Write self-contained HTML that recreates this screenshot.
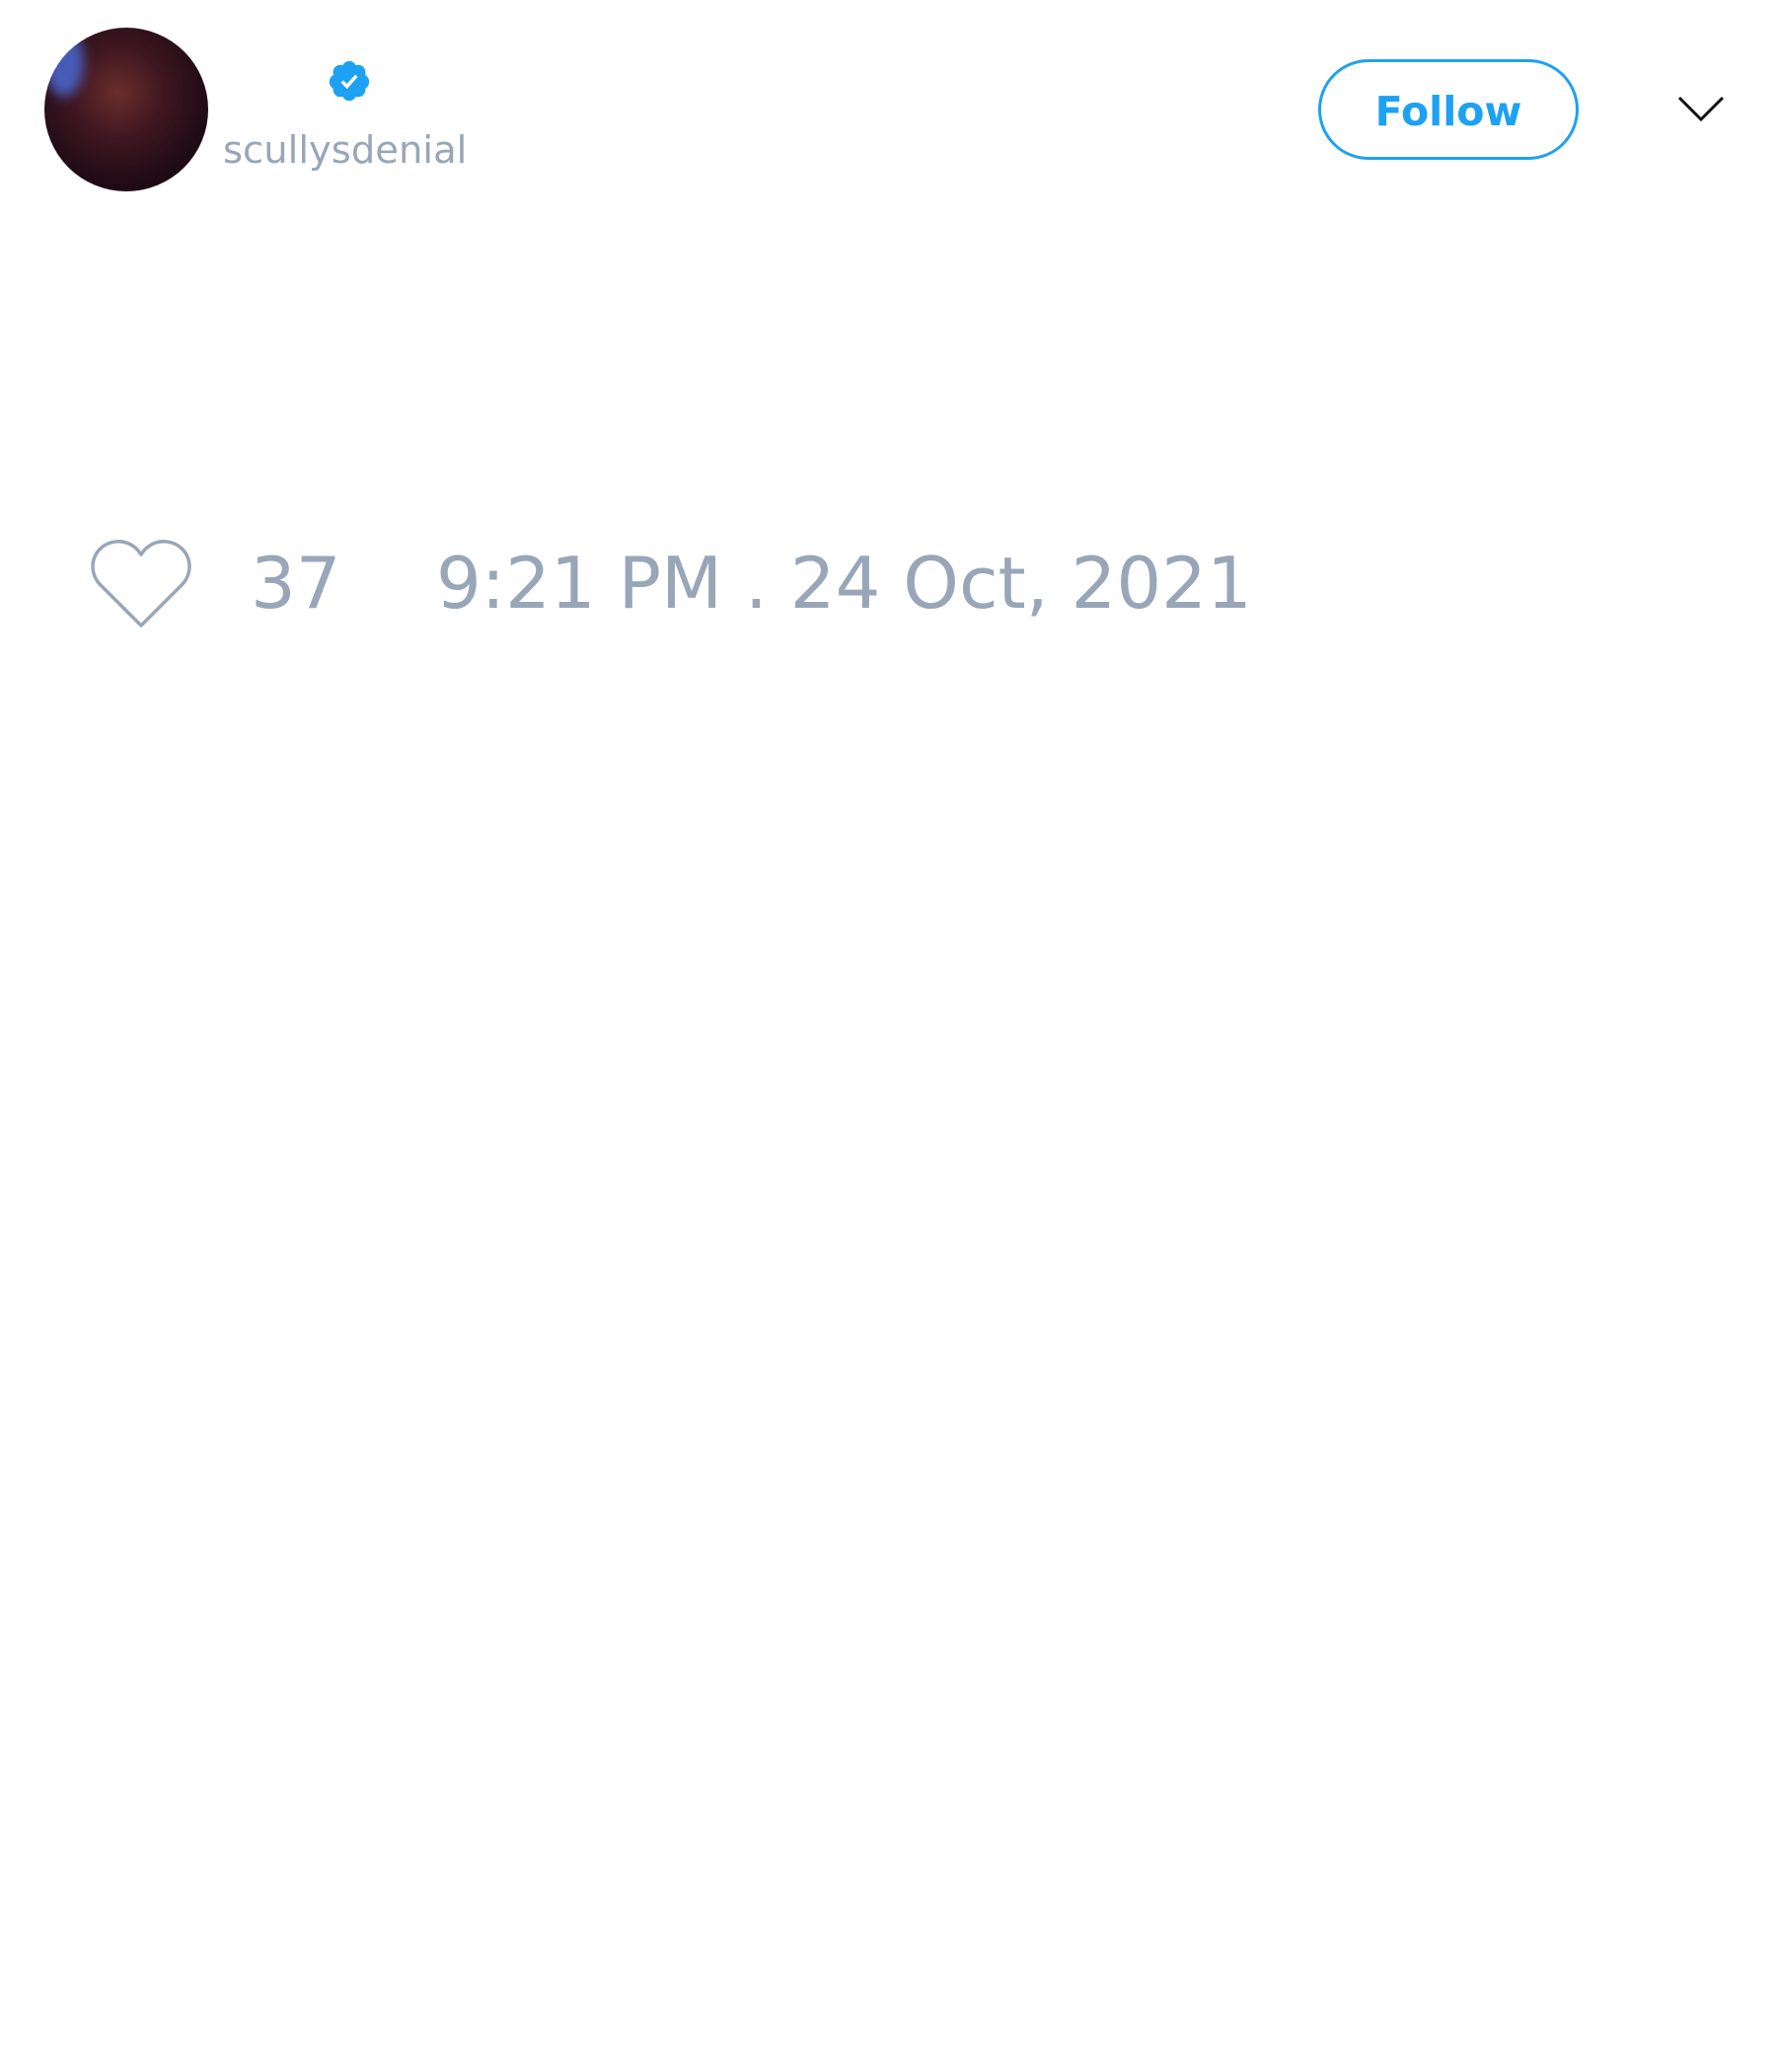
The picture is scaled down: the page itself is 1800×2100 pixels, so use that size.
<!DOCTYPE html>
<html><head><style>
html,body{margin:0;padding:0;background:#fff;width:1800px;height:2100px;overflow:hidden;font-family:"DejaVu Sans","Liberation Sans",sans-serif}
.av{position:absolute;left:45px;top:28px;width:166px;height:166px;border-radius:50%;background:radial-gradient(circle at 45% 40%,#6a2e2c 0%,#3e1620 35%,#220c16 65%,#10050c 100%);overflow:hidden}
.av:before{content:"";position:absolute;left:0;top:0;width:40px;height:70px;background:#4c6fe0;opacity:.8;border-radius:50%;filter:blur(6px)}
.handle{position:absolute;left:226px;top:130px;font-size:38.5px;color:#98a6b8}
.follow{position:absolute;left:1336px;top:60px;width:258px;height:96px;border:3px solid #1da1f2;border-radius:52px;color:#1da1f2;font-weight:bold;font-size:41px;text-align:center;line-height:100px}
.meta{position:absolute;top:548px;font-size:72px;color:#98a6b8;line-height:86px}
</style></head><body>
<div class="av"></div>
<svg style="position:absolute;left:331px;top:59px" width="46" height="46" viewBox="0 0 24 24"><path fill="#1da1f2" d="M22.5 12.5c0-1.58-.875-2.95-2.148-3.6.154-.435.238-.905.238-1.4 0-2.210-1.71-3.998-3.818-3.998-.47 0-.92.084-1.336.25C14.818 2.415 13.51 1.5 12 1.5s-2.816.917-3.437 2.250c-.415-.165-.866-.25-1.336-.25-2.11 0-3.818 1.79-3.818 4 0 .494.083.964.237 1.400-1.272.65-2.147 2.018-2.147 3.600 0 1.495.782 2.798 1.942 3.486-.02.17-.032.34-.032.514 0 2.210 1.708 4 3.818 4 .47 0 .92-.086 1.335-.25.62 1.334 1.926 2.250 3.437 2.250 1.512 0 2.818-.916 3.437-2.250.415.163.865.248 1.336.248 2.11 0 3.818-1.79 3.818-4 0-.174-.012-.344-.033-.513 1.158-.687 1.943-1.990 1.943-3.484z"/><path fill="none" stroke="#fff" stroke-width="1.8" d="M8.2 12.3l2.6 2.6 5-5.6"/></svg>
<div class="handle">scullysdenial</div>
<div class="follow">Follow</div>
<svg style="position:absolute;left:1700px;top:96px" width="48" height="30" viewBox="0 0 48 30"><path d="M2 3l22 22 22-22" fill="none" stroke="#111" stroke-width="3"/></svg>
<svg style="position:absolute;left:90px;top:546px" width="106" height="92" viewBox="0 0 106 92"><path d="M53 88L12 47C-2 33 3 10 22 4c13-4 25 2 31 12 6-10 18-16 31-12 19 6 24 29 10 43z" fill="none" stroke="#98a6b8" stroke-width="3.5" stroke-linejoin="round"/></svg>
<div class="meta" style="left:254px">37</div>
<div class="meta" style="left:442px">9:21 PM . 24 Oct, 2021</div>
</body></html>
